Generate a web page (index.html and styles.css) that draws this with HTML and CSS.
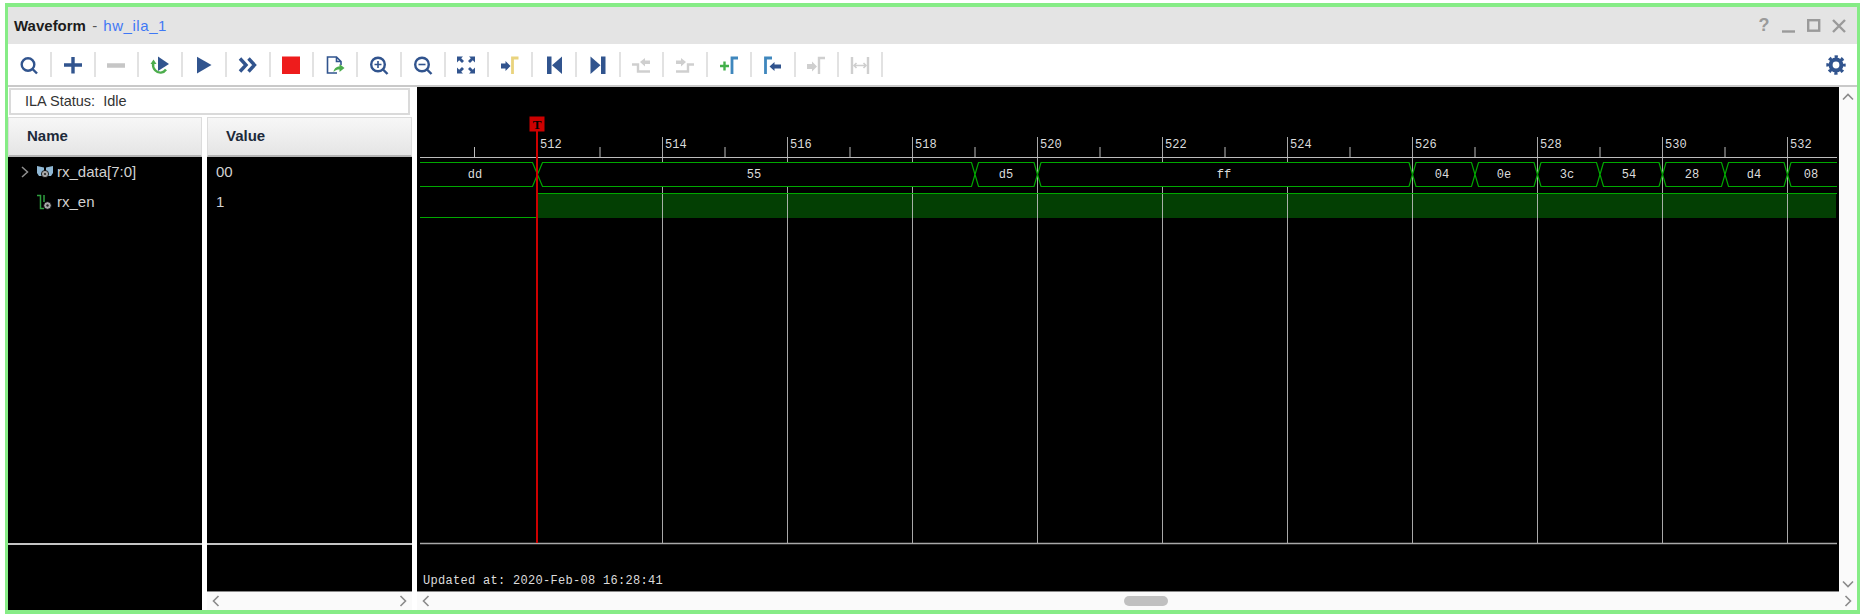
FILE: index.html
```html
<!DOCTYPE html>
<html lang="en">
<head>
<meta charset="utf-8">
<title>Waveform - hw_ila_1</title>
<link rel="stylesheet" href="styles.css">
</head>
<body>
<div class="window">
  <header class="titlebar">
    <div class="title"><b>Waveform</b> <span class="dash">-</span> <a class="link">hw_ila_1</a></div>
    <div class="controls">
      <span class="help">?</span>
      <svg class="ctl" viewBox="0 0 14 14"><path d="M0 12.5H13" /></svg>
      <svg class="ctl" viewBox="0 0 14 14"><rect x="1.2" y="1.2" width="11" height="10.5" /></svg>
      <svg class="ctl" viewBox="0 0 14 14"><path d="M1 1L13 13M13 1L1 13" /></svg>
    </div>
  </header>

  <nav class="toolbar">
    <div class="tool"><svg class="ic" viewBox="0 0 20 20"><circle class="s navy" cx="9" cy="9.5" r="6.3"/><path class="s navy" d="M13.5 14L18 18.5"/></svg></div>
    <div class="tool"><svg class="ic" viewBox="0 0 20 20"><path class="t navy" d="M1 10H19M10 2V18.5"/></svg></div>
    <div class="tool"><svg class="ic" viewBox="0 0 20 20"><path class="t grey" d="M1 10.5H19"/></svg></div>
    <div class="tool"><svg class="ic" viewBox="0 0 20 20"><path class="f navy" d="M8 1.5L19 9L8 16Z"/><path class="s green" d="M3.2 8C2 14 7 18 11 17.6C13.5 17.4 15 16 16 14.5"/><path class="f green" d="M0.5 9L3.5 4.5L6.5 9Z"/></svg></div>
    <div class="tool"><svg class="ic" viewBox="0 0 20 20"><path class="f navy" d="M3 1.8L17.5 10L3 18.6Z"/></svg></div>
    <div class="tool"><svg class="ic" viewBox="0 0 20 20"><path class="t navy" d="M2 3.5L8 10L2 16.5M10.5 3.5L16.5 10L10.5 16.5"/></svg></div>
    <div class="tool"><svg class="ic" viewBox="0 0 20 20"><rect class="f red" x="1" y="1.5" width="18" height="17.5"/></svg></div>
    <div class="tool"><svg class="ic" viewBox="0 0 20 20"><path class="thin navy" d="M12 18H2.5V2H11.5L16 6.5V10M11.5 2V6.5H16"/><path class="f green" d="M8.5 17C9 13 12 11.5 14.5 11.5V9L19.5 13L14.5 17V14.5C12.5 14.5 10.5 15 8.5 17Z"/></svg></div>
    <div class="tool"><svg class="ic" viewBox="0 0 20 20"><circle class="s navy" cx="9" cy="9.5" r="6.8"/><path class="s navy" d="M14 14.5L18.5 19"/><path class="thin navy" d="M5.5 9.5H12.5M9 6V13"/></svg></div>
    <div class="tool"><svg class="ic" viewBox="0 0 20 20"><circle class="s navy" cx="9" cy="9.5" r="6.8"/><path class="s navy" d="M14 14.5L18.5 19"/><path class="thin navy" d="M5.5 9.5H12.5"/></svg></div>
    <div class="tool"><svg class="ic" viewBox="0 0 20 20"><path class="f navy" d="M1 1.5H7L5.2 3.3L8 6L6 8L3.2 5.3L1 7.5ZM19 1.5V7.5L16.8 5.3L14 8L12 6L14.8 3.3L13 1.5ZM1 18.5V12.5L3.2 14.7L6 12L8 14L5.2 16.7L7 18.5ZM19 18.5H13L14.8 16.7L12 14L14 12L16.8 14.7L19 12.5Z"/></svg></div>
    <div class="tool"><svg class="ic" viewBox="0 0 20 20"><path class="f navy" d="M1 8.5H5.5V6L10.5 11L5.5 16V13.5H1Z"/><path class="m yellow" d="M12.5 19V3H18.5"/></svg></div>
    <div class="tool"><svg class="ic" viewBox="0 0 20 20"><rect class="f navy" x="3" y="1.5" width="4.5" height="17.5"/><path class="f navy" d="M18 1.5V19L8 10.2Z"/></svg></div>
    <div class="tool"><svg class="ic" viewBox="0 0 20 20"><rect class="f navy" x="13" y="1.5" width="4.5" height="17.5"/><path class="f navy" d="M2.5 1.5V19L12.5 10.2Z"/></svg></div>
    <div class="tool"><svg class="ic" viewBox="0 0 20 20"><path class="s ghost" d="M1 9.5H7V16.5H19"/><path class="f ghost" d="M9 7L14 3V5.5H19V9H14V11.5Z"/></svg></div>
    <div class="tool"><svg class="ic" viewBox="0 0 20 20"><path class="s ghost" d="M19 9.5H13V16.5H1"/><path class="f ghost" d="M11 7L6 3V5.5H1V9H6V11.5Z"/></svg></div>
    <div class="tool"><svg class="ic" viewBox="0 0 20 20"><path class="s plusgreen" d="M1 11H10M5.5 6.5V15.5"/><path class="m blue" d="M13 19V3H19"/></svg></div>
    <div class="tool"><svg class="ic" viewBox="0 0 20 20"><path class="m blue" d="M2.5 19V3H9"/><path class="f navy" d="M6.5 11.5L11.5 7V9.5H18V13.5H11.5V16Z"/></svg></div>
    <div class="tool"><svg class="ic" viewBox="0 0 20 20"><path class="f ghost" d="M1 9H6V6.5L11 11.5L6 16.5V14H1Z"/><path class="s ghost" d="M13 19V3H19"/></svg></div>
    <div class="tool"><svg class="ic" viewBox="0 0 20 20"><path class="s ghost" d="M2 2V19M18 2V19"/><path class="thin ghost" d="M4 10.5H16M6.5 8L4 10.5L6.5 13M13.5 8L16 10.5L13.5 13"/></svg></div>
    <div class="gear"><svg class="ic" viewBox="0 0 20 20"><circle class="gear-ring" cx="10" cy="10" r="5.4"/><circle class="gear-teeth" cx="10" cy="10" r="8"/></svg></div>
  </nav>

  <main class="main">
    <section class="left">
      <div class="status">ILA Status:&nbsp; Idle</div>
      <div class="cols">
        <div class="col col-name">
          <div class="head head-name">Name</div>
          <div class="rows">
            <div class="row row-first">
              <svg class="chev" viewBox="0 0 8 12"><path d="M1 1L6.5 6L1 11"/></svg>
              <svg class="sig" viewBox="0 0 16 16"><path class="bus-body" d="M0 2L7 3.5V10L5 12H2L0 9ZM16 2L9 3.5V10L11 12H14L16 9Z"/><circle class="sig-dot" cx="8" cy="10" r="3.6"/><circle class="sig-hole" cx="8" cy="10" r="1.1"/></svg>
              <span>rx_data[7:0]</span>
            </div>
            <div class="row">
              <span class="chev-space"></span>
              <svg class="sig" viewBox="0 0 16 16"><path class="wire" d="M0 1.5H3.5V14.5H7M7 1V8"/><circle class="sig-dot" cx="10.5" cy="11.5" r="3.8"/><circle class="sig-hole" cx="10.5" cy="11.5" r="1.2"/></svg>
              <span>rx_en</span>
            </div>
          </div>
          <div class="foot foot-name"></div>
        </div>
        <div class="col col-value">
          <div class="head head-value">Value</div>
          <div class="rows">
            <div class="row row-first val">00</div>
            <div class="row val">1</div>
          </div>
          <div class="foot foot-value"></div>
          <div class="hscroll">
            <svg class="arrow" viewBox="0 0 8 12"><path d="M6.5 1L1.5 6L6.5 11"/></svg>
            <svg class="arrow" viewBox="0 0 8 12"><path d="M1.5 1L6.5 6L1.5 11"/></svg>
          </div>
        </div>
      </div>
    </section>

    <section class="right">
      <div class="wave-row">
        <svg class="wave" viewBox="417 87 1422 505" width="1422" height="505">
          <path class="grid" d="M662.5 137V543.5M787.5 137V543.5M912.5 137V543.5M1037.5 137V543.5M1162.5 137V543.5M1287.5 137V543.5M1412.5 137V543.5M1537.5 137V543.5M1662.5 137V543.5M1787.5 137V543.5"/>
          <path class="axis" d="M420 157.5H1837M474.5 147V157M537.5 137V157M600 147V157M725 147V157M850 147V157M975 147V157M1100 147V157M1225 147V157M1350 147V157M1475 147V157M1600 147V157M1725 147V157"/>
          <path class="endline" d="M420 543.5H1837"/>
          <path class="frame" d="M417 591.5H1839"/>

          <text class="tick" x="540" y="148">512</text>
          <text class="tick" x="665" y="148">514</text>
          <text class="tick" x="790" y="148">516</text>
          <text class="tick" x="915" y="148">518</text>
          <text class="tick" x="1040" y="148">520</text>
          <text class="tick" x="1165" y="148">522</text>
          <text class="tick" x="1290" y="148">524</text>
          <text class="tick" x="1415" y="148">526</text>
          <text class="tick" x="1540" y="148">528</text>
          <text class="tick" x="1665" y="148">530</text>
          <text class="tick" x="1790" y="148">532</text>

          <path class="bus" d="M420 162.5H532.5L537.5 174.5L532.5 186.5H420"/>
          <path class="bus" d="M537.5 174.5L542.5 162.5H971.5L975 174.5L971.5 186.5H542.5Z"/>
          <path class="bus" d="M975 174.5L978.5 162.5H1034L1037.5 174.5L1034 186.5H978.5Z"/>
          <path class="bus" d="M1037.5 174.5L1041 162.5H1409L1412.5 174.5L1409 186.5H1041Z"/>
          <path class="bus" d="M1412.5 174.5L1416 162.5H1471.5L1475 174.5L1471.5 186.5H1416Z"/>
          <path class="bus" d="M1475 174.5L1478.5 162.5H1534L1537.5 174.5L1534 186.5H1478.5Z"/>
          <path class="bus" d="M1537.5 174.5L1541 162.5H1596.5L1600 174.5L1596.5 186.5H1541Z"/>
          <path class="bus" d="M1600 174.5L1603.5 162.5H1659L1662.5 174.5L1659 186.5H1603.5Z"/>
          <path class="bus" d="M1662.5 174.5L1666 162.5H1721.5L1725 174.5L1721.5 186.5H1666Z"/>
          <path class="bus" d="M1725 174.5L1728.5 162.5H1784L1787.5 174.5L1784 186.5H1728.5Z"/>
          <path class="bus" d="M1837 162.5H1791L1787.5 174.5L1791 186.5H1837"/>

          <text class="lbl" x="475" y="178">dd</text>
          <text class="lbl" x="754" y="178">55</text>
          <text class="lbl" x="1006" y="178">d5</text>
          <text class="lbl" x="1224" y="178">ff</text>
          <text class="lbl" x="1442" y="178">04</text>
          <text class="lbl" x="1504" y="178">0e</text>
          <text class="lbl" x="1567" y="178">3c</text>
          <text class="lbl" x="1629" y="178">54</text>
          <text class="lbl" x="1692" y="178">28</text>
          <text class="lbl" x="1754" y="178">d4</text>
          <text class="lbl" x="1811" y="178">08</text>

          <rect class="high" x="538" y="194" width="1298" height="24"/>
          <path class="sigline" d="M420 217.5H537M538 193.5H1837"/>
          <path class="gridover" d="M662.5 194V218M787.5 194V218M912.5 194V218M1037.5 194V218M1162.5 194V218M1287.5 194V218M1412.5 194V218M1537.5 194V218M1662.5 194V218M1787.5 194V218"/>

          <path class="cursor" d="M537 131V543"/>
          <rect class="marker" x="529.5" y="116.5" width="15" height="15"/>
          <text class="marker-t" x="537" y="129">T</text>

          <text class="stamp" x="423" y="584">Updated at: 2020-Feb-08 16:28:41</text>
        </svg>
        <div class="vscroll">
          <svg class="arrow-v" viewBox="0 0 12 8"><path d="M1 6.5L6 1.5L11 6.5"/></svg>
          <svg class="arrow-v" viewBox="0 0 12 8"><path d="M1 1.5L6 6.5L11 1.5"/></svg>
        </div>
      </div>
      <div class="hscroll hscroll-wave">
        <svg class="arrow" viewBox="0 0 8 12"><path d="M6.5 1L1.5 6L6.5 11"/></svg>
        <span class="thumb"></span>
        <svg class="arrow" viewBox="0 0 8 12"><path d="M1.5 1L6.5 6L1.5 11"/></svg>
      </div>
    </section>
  </main>
</div>
</body>
</html>
```

FILE: styles.css
```css
* { box-sizing: border-box; }

html, body {
  margin: 0;
  padding: 0;
  background: #fff;
}

body {
  width: 1863px;
  height: 616px;
  padding: 3px 3px 2px 5px;
  overflow: hidden;
  font-family: "Liberation Sans", Arial, sans-serif;
}

.window {
  width: 1855px;
  height: 611px;
  border: 3px solid #86ec86;
  border-width: 4px 3px;
  background: #fff;
  display: flex;
  flex-direction: column;
}

/* Title bar */
.titlebar {
  height: 37px;
  flex: none;
  background: #e4e4e4;
  display: flex;
  align-items: center;
  justify-content: space-between;
  padding: 0 11px 0 6px;
}

.title {
  font-size: 15px;
  color: #555;
}
.title b { color: #1c1c1c; }
.dash { color: #555; margin: 0 2px; }
.link { color: #3f78f5; letter-spacing: .55px; }

.controls {
  display: flex;
  align-items: center;
  gap: 11px;
}

.help {
  font-size: 18px;
  font-weight: bold;
  color: #9a9a9a;
  width: 14px;
  text-align: center;
}

.ctl {
  width: 14px;
  height: 14px;
  fill: none;
  stroke: #9a9a9a;
  stroke-width: 2.4;
}

/* Toolbar */
.toolbar {
  height: 43px;
  flex: none;
  border-bottom: 2px solid #c9c9c9;
  display: flex;
  align-items: center;
}

.tool {
  width: 43.75px;
  height: 25px;
  flex: none;
  border-right: 2px solid #e2e2e2;
  display: flex;
  align-items: center;
  justify-content: center;
}

.gear {
  margin-left: auto;
  margin-right: 11px;
  display: flex;
}

.ic {
  width: 20px;
  height: 20px;
  display: block;
  fill: none;
}

.s, .t, .m, .thin { fill: none; }
.s { stroke-width: 2.4; }
.m { stroke-width: 2.8; }
.t { stroke-width: 3.4; }
.thin { stroke-width: 1.6; }
.s.navy, .t.navy, .thin.navy { stroke: #31548e; }
.s.green { stroke: #4cad4c; }
.s.ghost, .thin.ghost { stroke: #cfcfcf; }
.t.grey { stroke: #c6c6c6; stroke-width: 4.5; }
.m.yellow { stroke: #e9d37d; }
.s.plusgreen { stroke: #43b04a; }
.m.blue { stroke: #3f87bd; }
.f.navy { fill: #31548e; }
.f.green { fill: #4cad4c; }
.f.red { fill: #ee1c1c; }
.f.ghost { fill: #cfcfcf; }

.gear-ring {
  fill: none;
  stroke: #31548e;
  stroke-width: 4;
}
.gear-teeth {
  fill: none;
  stroke: #31548e;
  stroke-width: 3.4;
  stroke-dasharray: 3.14 3.14;
  stroke-dashoffset: 1.57;
}

/* Main area */
.main {
  flex: 1;
  display: flex;
  min-height: 0;
}

.left {
  width: 409px;
  flex: none;
  display: flex;
  flex-direction: column;
}

.status {
  height: 27px;
  width: 401px;
  margin: 1px 0 2px 1px;
  border: 2px solid #dadada;
  padding-left: 14px;
  font-size: 14.5px;
  line-height: 23px;
  color: #333;
}

.cols {
  flex: 1;
  display: flex;
  gap: 5px;
  min-height: 0;
}

.col {
  display: flex;
  flex-direction: column;
}
.col-name { width: 194px; }
.col-value { width: 205px; }

.head {
  height: 40px;
  flex: none;
  background: linear-gradient(#f7f7f7, #e5e5e5);
  border: 1px solid #dcdcdc;
  border-bottom: 2px solid #b5b5b5;
  font-size: 15px;
  font-weight: bold;
  line-height: 36px;
  color: #1d2a3a;
}
.head-name { padding-left: 18px; }
.head-value { padding-left: 18px; }

.rows {
  flex: 1;
  background: #000;
  color: #d2d2d2;
  font-size: 15px;
}

.row {
  height: 31px;
  display: flex;
  align-items: center;
}
.row-first { height: 29px; }
.val { padding-left: 9px; }

.chev {
  width: 8px;
  height: 12px;
  margin-left: 13px;
  margin-right: 8px;
  fill: none;
  stroke: #8f8f8f;
  stroke-width: 1.5;
}
.chev-space {
  width: 29px;
}

.sig {
  width: 16px;
  height: 16px;
  margin-right: 4px;
}
.bus-body { fill: #8fb7d4; }
.sig-dot { fill: #a8a8a8; stroke: #000; stroke-width: .8; }
.sig-hole { fill: #222; }
.wire { fill: none; stroke: #2f9e3f; stroke-width: 1.5; }

.foot {
  flex: none;
  background: #000;
  border-top: 2px solid #c4c4c4;
}
.foot-name { height: 67px; }
.foot-value { height: 49px; border-bottom: 1px solid #888; }

.hscroll {
  height: 18px;
  flex: none;
  background: #fafafa;
  display: flex;
  align-items: center;
  justify-content: space-between;
  padding: 0 5px;
}

.arrow {
  width: 8px;
  height: 12px;
  fill: none;
  stroke: #8a8a8a;
  stroke-width: 1.6;
}

/* Waveform */
.right {
  flex: 1;
  min-width: 0;
  display: flex;
  flex-direction: column;
}

.wave-row {
  height: 505px;
  flex: none;
  display: flex;
}

.wave {
  display: block;
  flex: none;
  background: #000;
}

.vscroll {
  flex: 1;
  background: #fafafa;
  display: flex;
  flex-direction: column;
  align-items: center;
  justify-content: space-between;
  padding: 6px 0 4px;
}

.arrow-v {
  width: 12px;
  height: 8px;
  fill: none;
  stroke: #8a8a8a;
  stroke-width: 1.6;
}

.hscroll-wave {
  justify-content: flex-start;
}

.thumb {
  width: 44px;
  height: 10px;
  margin-left: 694px;
  margin-right: auto;
  border-radius: 5px;
  background: #c0c0c0;
}

.grid { fill: none; stroke: #a8a8a8; stroke-width: 1; }
.gridover { fill: none; stroke: #a8b0a8; stroke-width: 1; }
.axis { fill: none; stroke: #bdbdbd; stroke-width: 1; }
.endline { fill: none; stroke: #a8a8a8; stroke-width: 1.4; }
.frame { fill: none; stroke: #888; stroke-width: 1; }
.bus { fill: #000; stroke: #00a800; stroke-width: 1.2; }
.high { fill: #033f03; }
.sigline { fill: none; stroke: #00a800; stroke-width: 1.2; }
.cursor { fill: none; stroke: #cc0000; stroke-width: 2; }
.marker { fill: #cc0000; }

.tick, .lbl, .stamp {
  font-family: "Liberation Mono", monospace;
  font-size: 12px;
  fill: #dcdcdc;
}
.lbl { text-anchor: middle; }
.stamp { letter-spacing: .3px; }
.marker-t {
  font-family: "Liberation Serif", serif;
  font-size: 13px;
  font-weight: bold;
  fill: #000;
  text-anchor: middle;
}
```
